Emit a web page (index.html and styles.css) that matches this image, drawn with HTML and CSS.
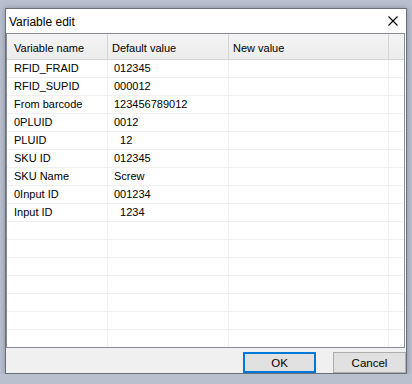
FILE: index.html
```html
<!DOCTYPE html>
<html lang="en">
<head>
    <meta charset="UTF-8">
    <title>Variable edit</title>
    <link rel="stylesheet" href="styles.css">
</head>
<body>
<div class="window">
    <div class="title-bar">
        <span class="title">Variable edit</span>
        <svg class="close" width="10" height="10" viewBox="0 0 10 10">
            <path d="M0.5 0.5 L9.5 9.5 M9.5 0.5 L0.5 9.5" stroke="#000" stroke-width="1.1" fill="none"/>
        </svg>
    </div>
    <div class="grid">
        <div class="row head">
            <div class="cell c1">Variable name</div>
            <div class="cell c2">Default value</div>
            <div class="cell c3">New value</div>
            <div class="cell c4"></div>
        </div>
        <div class="row"><div class="cell c1">RFID_FRAID</div><div class="cell c2">012345</div><div class="cell c3"></div><div class="cell c4"></div></div>
        <div class="row"><div class="cell c1">RFID_SUPID</div><div class="cell c2">000012</div><div class="cell c3"></div><div class="cell c4"></div></div>
        <div class="row"><div class="cell c1">From barcode</div><div class="cell c2">123456789012</div><div class="cell c3"></div><div class="cell c4"></div></div>
        <div class="row"><div class="cell c1">0PLUID</div><div class="cell c2">0012</div><div class="cell c3"></div><div class="cell c4"></div></div>
        <div class="row"><div class="cell c1">PLUID</div><div class="cell c2">  12</div><div class="cell c3"></div><div class="cell c4"></div></div>
        <div class="row"><div class="cell c1">SKU ID</div><div class="cell c2">012345</div><div class="cell c3"></div><div class="cell c4"></div></div>
        <div class="row"><div class="cell c1">SKU Name</div><div class="cell c2">Screw</div><div class="cell c3"></div><div class="cell c4"></div></div>
        <div class="row"><div class="cell c1">0Input ID</div><div class="cell c2">001234</div><div class="cell c3"></div><div class="cell c4"></div></div>
        <div class="row"><div class="cell c1">Input ID</div><div class="cell c2">  1234</div><div class="cell c3"></div><div class="cell c4"></div></div>
        <div class="row"><div class="cell c1"></div><div class="cell c2"></div><div class="cell c3"></div><div class="cell c4"></div></div>
        <div class="row"><div class="cell c1"></div><div class="cell c2"></div><div class="cell c3"></div><div class="cell c4"></div></div>
        <div class="row"><div class="cell c1"></div><div class="cell c2"></div><div class="cell c3"></div><div class="cell c4"></div></div>
        <div class="row"><div class="cell c1"></div><div class="cell c2"></div><div class="cell c3"></div><div class="cell c4"></div></div>
        <div class="row"><div class="cell c1"></div><div class="cell c2"></div><div class="cell c3"></div><div class="cell c4"></div></div>
        <div class="row"><div class="cell c1"></div><div class="cell c2"></div><div class="cell c3"></div><div class="cell c4"></div></div>
        <div class="row"><div class="cell c1"></div><div class="cell c2"></div><div class="cell c3"></div><div class="cell c4"></div></div>
    </div>
    <div class="buttons">
        <button class="btn default">OK</button>
        <button class="btn">Cancel</button>
    </div>
</div>
</body>
</html>
```

FILE: styles.css
```css
body {
    margin: 0;
    background: #b9c1cf;
    font-family: "Liberation Sans", Arial, sans-serif;
}

.window {
    box-sizing: border-box;
    width: 402px;
    height: 366px;
    margin: 8px 0 0 5px;
    border: 1px solid #6b7078;
    background: #fff;
    box-shadow: 0 0 6px rgba(40, 50, 70, .35);
    display: flex;
    flex-direction: column;
}

.title-bar {
    height: 24px;
    display: flex;
    align-items: center;
    justify-content: space-between;
    padding: 0 8px 0 3px;
}

.title {
    font-size: 12px;
    color: #000;
    padding-top: 1px;
}

.close {
    display: block;
}

/* the grid: 16 rows of 18px, header 26px */
.grid {
    width: 399px;
    box-sizing: border-box;
    border: 1px solid #878c94;
    font-size: 11px;
    color: #000;
}

.row {
    display: flex;
    height: 17px;
    border-bottom: 1px solid #f0f0f0;
}

.row:last-child {
    border-bottom: none;
}

.row.head {
    height: 25px;
    border-bottom: 1px solid #d5d5d5;
    background: linear-gradient(#f4f4f4, #ececec);
}

.cell {
    box-sizing: border-box;
    line-height: 17px;
    white-space: pre;
    overflow: hidden;
}

.c1 { width: 101px; padding-left: 7px; border-right: 1px solid #f0f0f0; }
.c2 { width: 121px; padding-left: 6px; border-right: 1px solid #f0f0f0; }
.c3 { width: 160px; padding-left: 4px; border-right: 1px solid #f0f0f0; }
.c4 { flex: 1; }

.head .cell {
    line-height: 21px;
    padding-top: 4px;
    border-right-color: #d5d5d5;
}

.head .c2 { padding-left: 4px; }

.buttons {
    flex: 1;
    background: #f0f0f0;
    display: flex;
    justify-content: flex-end;
    align-items: flex-start;
    gap: 17px;
    padding-top: 4px;
}

.btn {
    box-sizing: border-box;
    width: 73px;
    height: 21px;
    margin: 0;
    padding: 0;
    border: 1px solid #adadad;
    background: #e1e1e1;
    font-family: "Liberation Sans", Arial, sans-serif;
    font-size: 11.5px;
    color: #000;
}

.btn.default {
    border: 2px solid #0078d7;
}
```
